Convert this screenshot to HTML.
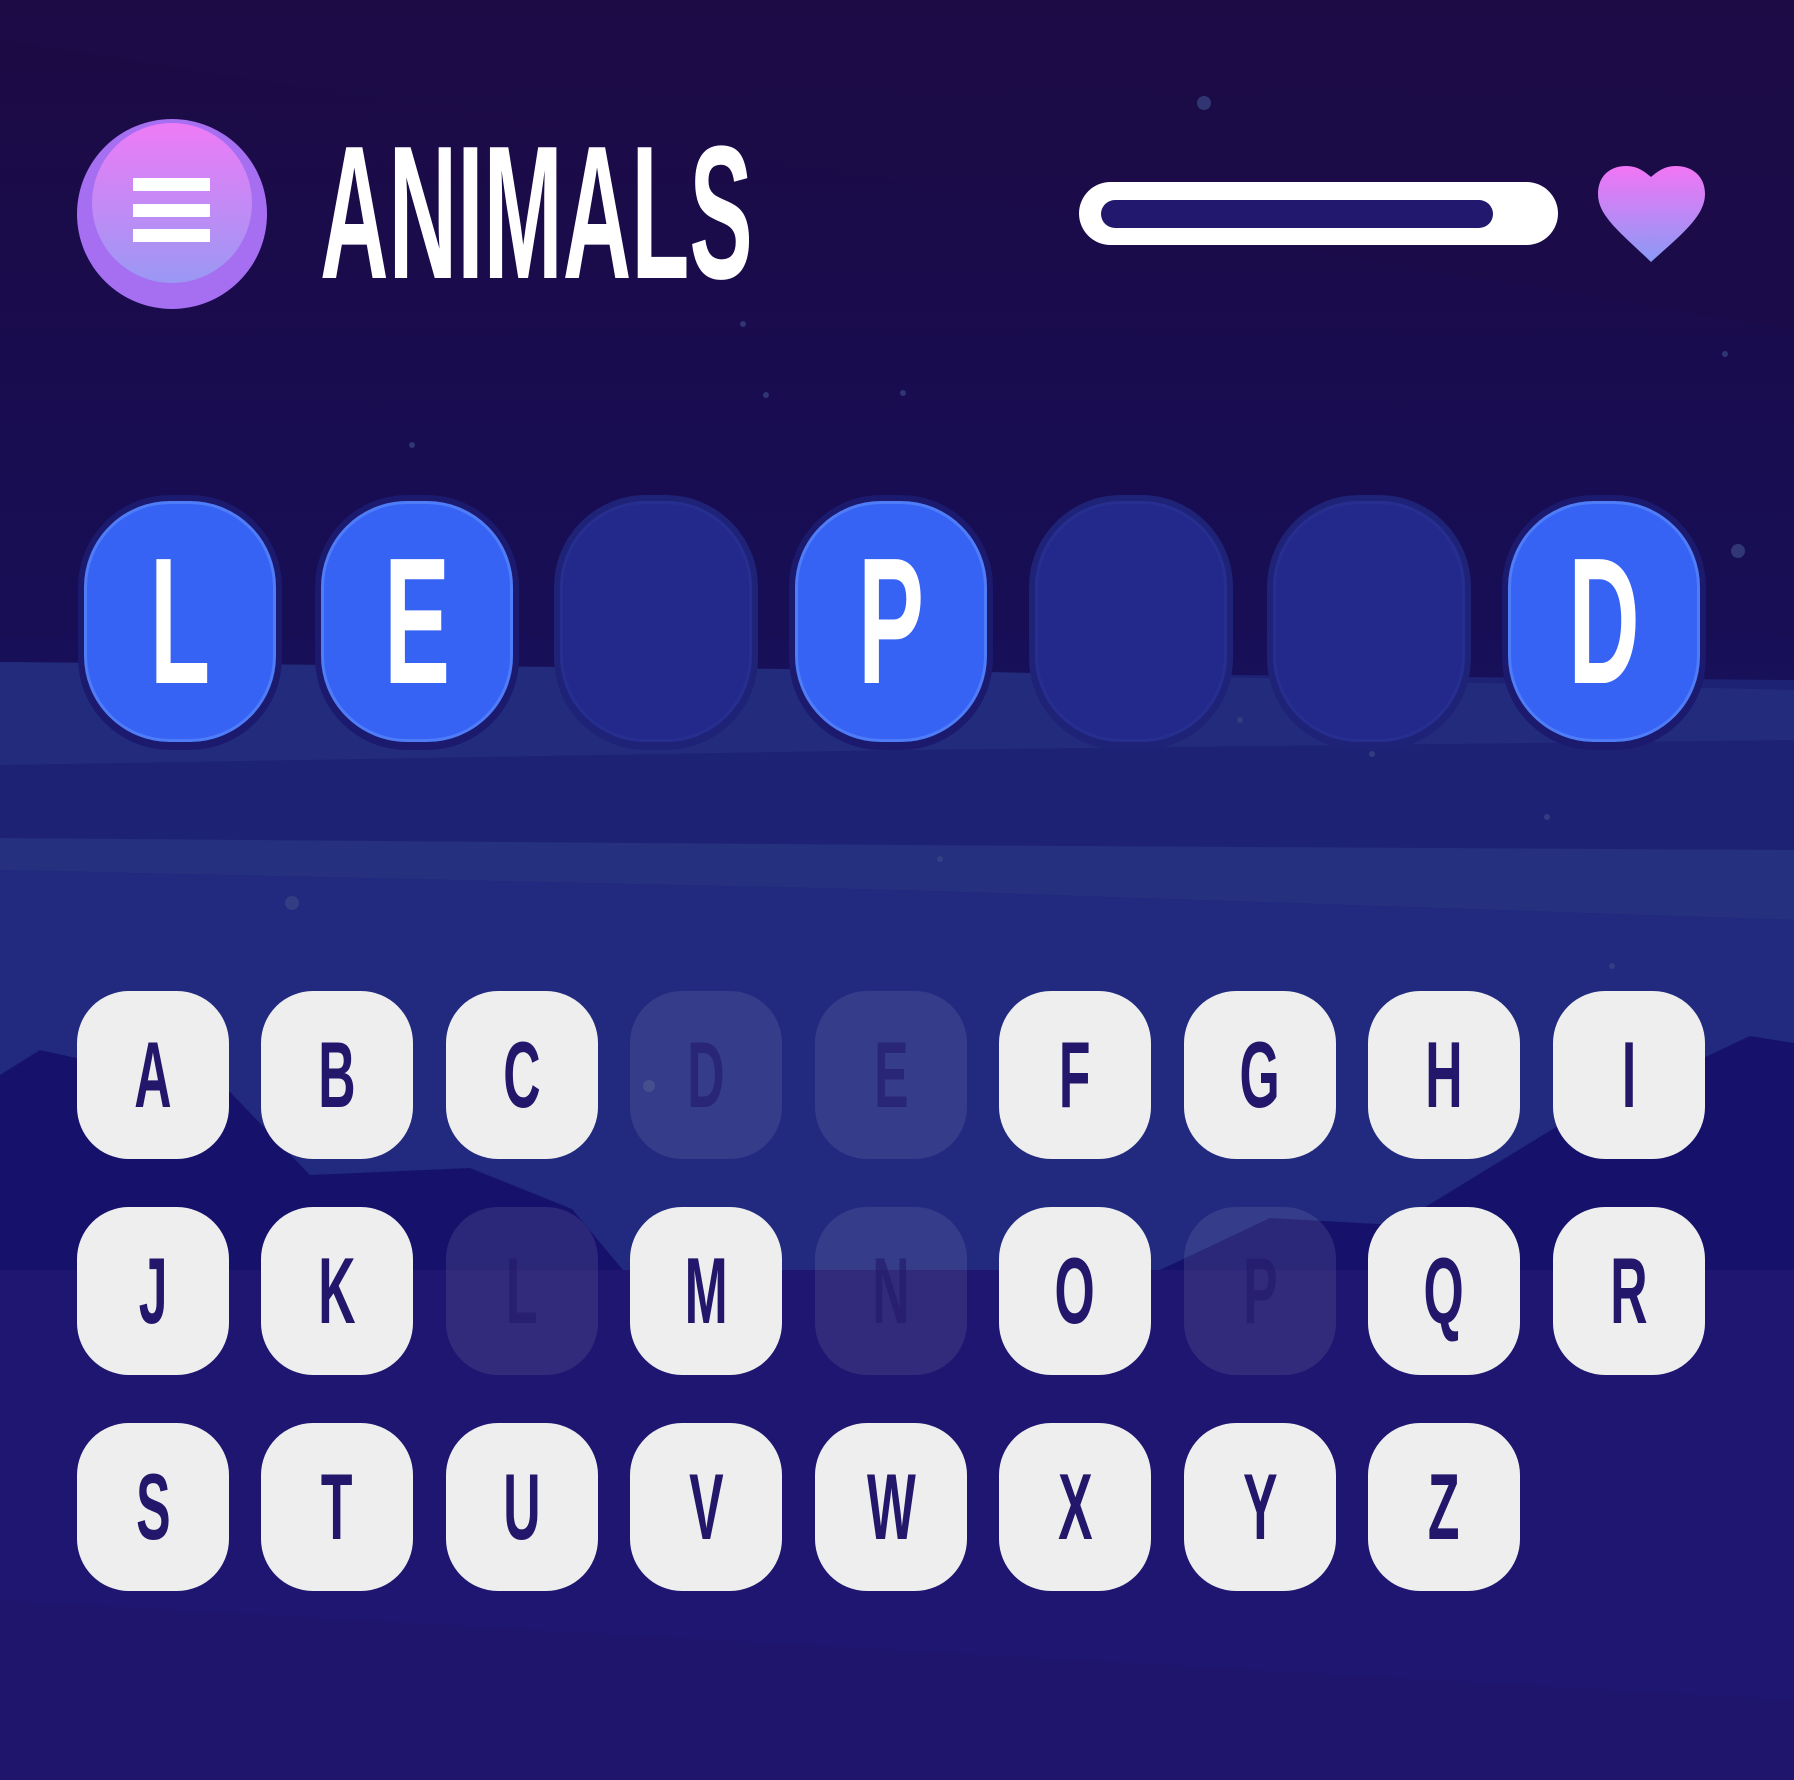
<!DOCTYPE html>
<html><head><meta charset="utf-8"><style>
*{margin:0;padding:0;box-sizing:border-box}
body{width:1794px;height:1780px;overflow:hidden;position:relative;background:#1a0f52;font-family:"Liberation Sans",sans-serif}
svg.bg{position:absolute;left:0;top:0}
.abs{position:absolute}
.lt{display:inline-block;transform:scaleX(0.55);font-weight:bold}
.slot{position:absolute;width:204px;height:255px;border-radius:92px;background:#1b1a6e;top:495px}
.slot .in{position:absolute;left:6px;top:6px;right:6px;bottom:8px;border-radius:86px;background:#3763f5;border:3px solid #4f7cf7;display:flex;align-items:center;justify-content:center;color:#fff;font-size:180px;line-height:1}
.slot.e{background:#1f2378}
.slot.e .in{background:#22298a;border-color:#262f90}
.key{position:absolute;width:152px;height:168px;border-radius:52px;background:#eeeeee;display:flex;align-items:center;justify-content:center;color:#22176a;font-size:94px;line-height:1}
.key.d{background:rgba(255,255,255,0.09);color:rgba(34,23,106,0.6)}
</style></head><body>
<svg class="bg" width="1794" height="1780" viewBox="0 0 1794 1780">
<defs>
<linearGradient id="g" x1="0" y1="0" x2="0" y2="1"><stop offset="0" stop-color="#1c0a43"/><stop offset="0.35" stop-color="#170e56"/><stop offset="0.6" stop-color="#1b1d6d"/><stop offset="1" stop-color="#23166a"/></linearGradient>
</defs>
<rect width="1794" height="1780" fill="url(#g)"/>
<polygon points="0,40 700,150 1794,330 1794,0 0,0" fill="#1d0b47" opacity="0.6"/>
<polygon points="0,662 900,672 1794,680 1794,1270 0,1270" fill="#1e2274"/>
<polygon points="0,662 900,670 1794,690 1794,740 900,750 0,765" fill="#232c7c"/>
<polygon points="0,838 900,845 1794,850 1794,920 900,890 0,870" fill="#25307f"/>
<polygon points="0,870 900,890 1794,920 1794,1270 0,1270" fill="#212a7f"/>
<polygon points="0,1075 40,1050 230,1092 310,1175 470,1168 572,1209 623,1270 1160,1270 1270,1218 1396,1225 1556,1127 1750,1036 1794,1043 1794,1780 0,1780" fill="#16126c"/>
<polygon points="0,1270 1794,1270 1794,1780 0,1780" fill="#1e1670"/>
<polygon points="0,1600 1794,1700 1794,1780 0,1780" fill="#22166a" opacity="0.6"/>
<g fill="#3a4785" opacity="0.7"><circle cx="1204" cy="103" r="7"/><circle cx="1738" cy="551" r="7"/><circle cx="1459" cy="556" r="6"/><circle cx="292" cy="903" r="7"/><circle cx="649" cy="1086" r="6"/><circle cx="743" cy="324" r="3"/><circle cx="766" cy="395" r="3"/><circle cx="903" cy="393" r="3"/><circle cx="412" cy="445" r="3"/><circle cx="1725" cy="354" r="3"/><circle cx="1228" cy="658" r="3"/><circle cx="1240" cy="720" r="3"/><circle cx="1372" cy="754" r="3"/><circle cx="1547" cy="817" r="3"/><circle cx="940" cy="859" r="3"/><circle cx="1612" cy="966" r="3"/></g>
<defs><linearGradient id="m2" x1="0" y1="0" x2="0" y2="1"><stop offset="0" stop-color="#ee7bf6"/><stop offset="1" stop-color="#9a98f4"/></linearGradient>
<linearGradient id="h" x1="0" y1="0" x2="0" y2="1"><stop offset="0" stop-color="#f275f5"/><stop offset="1" stop-color="#8a9af5"/></linearGradient></defs>
<circle cx="172" cy="214" r="95" fill="#a66ff2"/>
<circle cx="172" cy="203" r="80" fill="url(#m2)"/>
<rect x="133" y="178" width="77" height="13" fill="#fff"/>
<rect x="133" y="204" width="77" height="13" fill="#fff"/>
<rect x="133" y="229" width="77" height="13" fill="#fff"/>
<rect x="1079" y="182" width="479" height="63" rx="31.5" fill="#fff"/>
<rect x="1101" y="200" width="392" height="28" rx="14" fill="#22196e"/>
<path d="M1651,262 C1620,232 1598,216 1598,194 C1598,176 1610,166 1626,166 C1638,166 1645,172 1651,177 C1657,172 1664,166 1676,166 C1692,166 1705,176 1705,194 C1705,216 1682,234 1651,262 Z" fill="url(#h)"/>
</svg>
<div class="abs" style="left:320px;top:138px;width:460px;height:150px;color:#fff;font-size:190px;line-height:150px;white-space:nowrap"><span class="lt" style="transform:scaleX(0.5);transform-origin:left">ANIMALS</span></div>

<div class="slot" style="left:78px"><div class="in"><span class="lt">L</span></div></div>
<div class="slot" style="left:315px"><div class="in"><span class="lt">E</span></div></div>
<div class="slot e" style="left:554px"><div class="in"></div></div>
<div class="slot" style="left:789px"><div class="in"><span class="lt">P</span></div></div>
<div class="slot e" style="left:1029px"><div class="in"></div></div>
<div class="slot e" style="left:1267px"><div class="in"></div></div>
<div class="slot" style="left:1502px"><div class="in"><span class="lt">D</span></div></div>

<div class="key" style="left:77px;top:991px"><span class="lt">A</span></div>
<div class="key" style="left:261px;top:991px"><span class="lt">B</span></div>
<div class="key" style="left:446px;top:991px"><span class="lt">C</span></div>
<div class="key d" style="left:630px;top:991px"><span class="lt">D</span></div>
<div class="key d" style="left:815px;top:991px"><span class="lt">E</span></div>
<div class="key" style="left:999px;top:991px"><span class="lt">F</span></div>
<div class="key" style="left:1184px;top:991px"><span class="lt">G</span></div>
<div class="key" style="left:1368px;top:991px"><span class="lt">H</span></div>
<div class="key" style="left:1553px;top:991px"><span class="lt">I</span></div>

<div class="key" style="left:77px;top:1207px"><span class="lt">J</span></div>
<div class="key" style="left:261px;top:1207px"><span class="lt">K</span></div>
<div class="key d" style="left:446px;top:1207px"><span class="lt">L</span></div>
<div class="key" style="left:630px;top:1207px"><span class="lt">M</span></div>
<div class="key d" style="left:815px;top:1207px"><span class="lt">N</span></div>
<div class="key" style="left:999px;top:1207px"><span class="lt">O</span></div>
<div class="key d" style="left:1184px;top:1207px"><span class="lt">P</span></div>
<div class="key" style="left:1368px;top:1207px"><span class="lt">Q</span></div>
<div class="key" style="left:1553px;top:1207px"><span class="lt">R</span></div>

<div class="key" style="left:77px;top:1423px"><span class="lt">S</span></div>
<div class="key" style="left:261px;top:1423px"><span class="lt">T</span></div>
<div class="key" style="left:446px;top:1423px"><span class="lt">U</span></div>
<div class="key" style="left:630px;top:1423px"><span class="lt">V</span></div>
<div class="key" style="left:815px;top:1423px"><span class="lt">W</span></div>
<div class="key" style="left:999px;top:1423px"><span class="lt">X</span></div>
<div class="key" style="left:1184px;top:1423px"><span class="lt">Y</span></div>
<div class="key" style="left:1368px;top:1423px"><span class="lt">Z</span></div>
</body></html>
